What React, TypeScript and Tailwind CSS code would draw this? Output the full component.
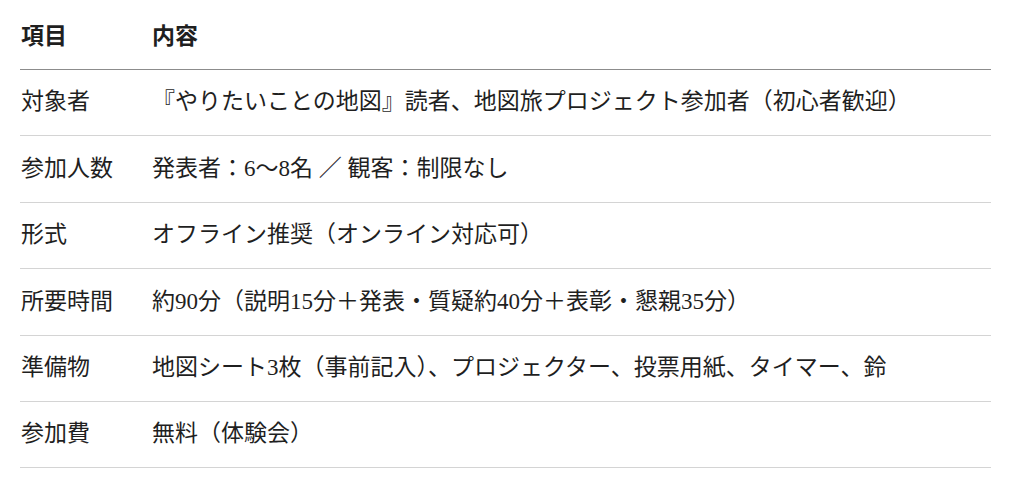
import React from 'react';

const rows = [
  ['対象者', '『やりたいことの地図』読者、地図旅プロジェクト参加者（初心者歓迎）'],
  ['参加人数', '発表者：6〜8名 ／ 観客：制限なし'],
  ['形式', 'オフライン推奨（オンライン対応可）'],
  ['所要時間', '約90分（説明15分＋発表・質疑約40分＋表彰・懇親35分）'],
  ['準備物', '地図シート3枚（事前記入）、プロジェクター、投票用紙、タイマー、鈴'],
  ['参加費', '無料（体験会）'],
];

const App = () => {
  return (
    <div
      className="w-[1024px] h-[486px] bg-white text-[#1f1f1f] overflow-hidden"
      style={{ fontFamily: '"Liberation Serif", "Noto Sans CJK JP", serif' }}
    >
      <div className="ml-[20px] w-[971px] pt-[6px]">
        {/* Header */}
        <div className="flex items-center h-[64px] border-b border-[#8c8c8c] font-bold text-[23px]">
          <div className="w-[132px] pl-[1px]">項目</div>
          <div>内容</div>
        </div>

        {rows.map(([label, value]) => (
          <div
            key={label}
            className="flex items-center h-[66.4px] border-b border-[#d4d4d4] text-[23px]"
          >
            <div className="w-[132px] pl-[1px] shrink-0">{label}</div>
            <div className="whitespace-nowrap">{value}</div>
          </div>
        ))}
      </div>
    </div>
  );
};

export default App;
